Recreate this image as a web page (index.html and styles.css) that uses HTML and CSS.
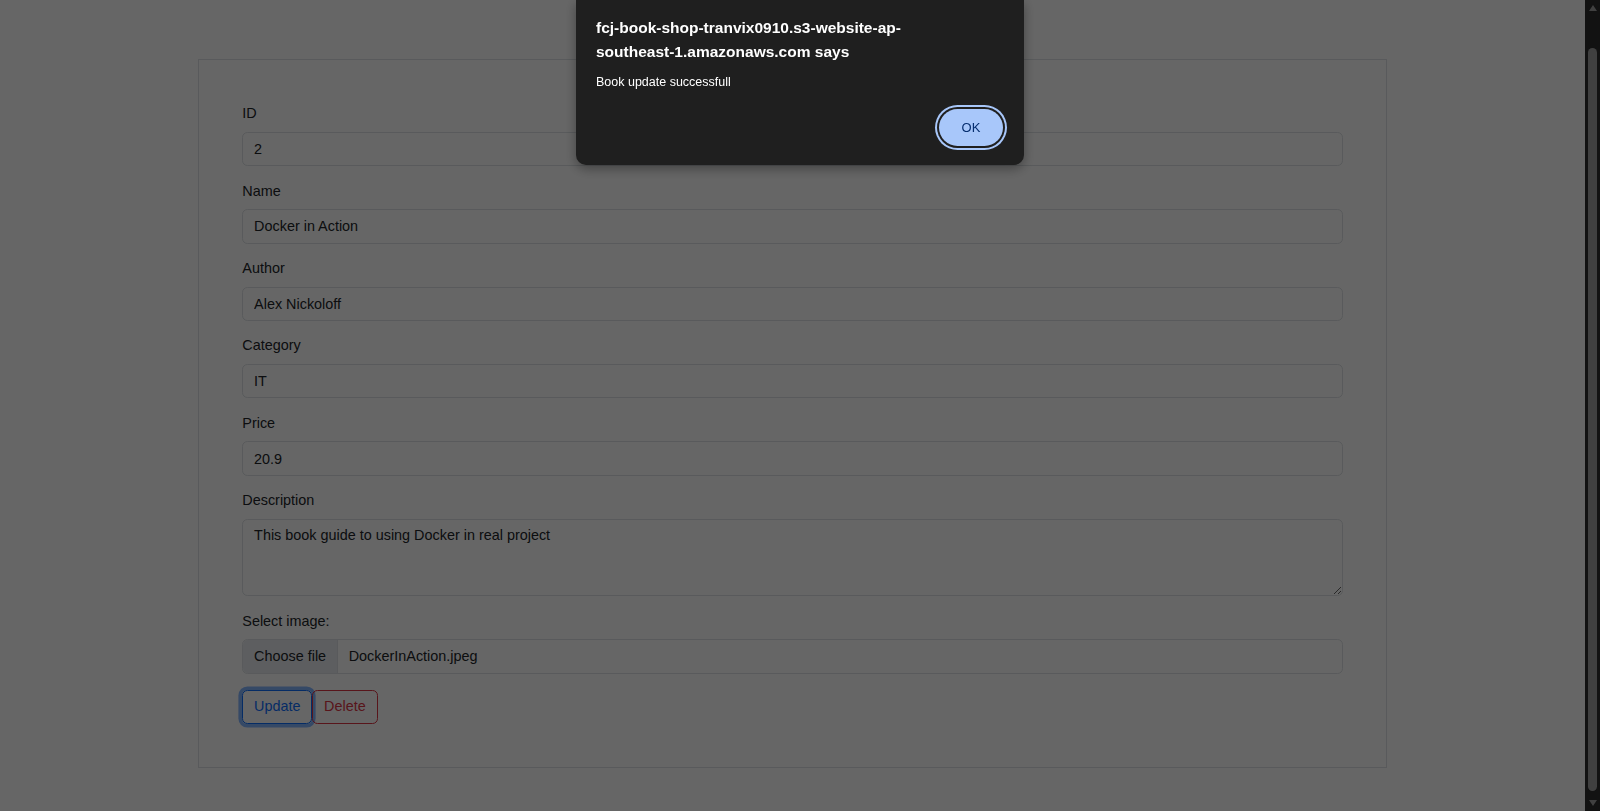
FILE: index.html
```html
<!DOCTYPE html>
<html lang="en">
<head>
    <meta charset="UTF-8">
    <meta name="viewport" content="width=device-width, initial-scale=1.0">
    <title>Book detail</title>
    <link rel="stylesheet" href="styles.css">
</head>
<body>
    <div class="window">
        <main class="page">
            <form class="book-card">
                <div class="field">
                    <label class="field-label">ID</label>
                    <input class="field-input" type="text" value="2">
                </div>
                <div class="field">
                    <label class="field-label">Name</label>
                    <input class="field-input" type="text" value="Docker in Action">
                </div>
                <div class="field">
                    <label class="field-label">Author</label>
                    <input class="field-input" type="text" value="Alex Nickoloff">
                </div>
                <div class="field">
                    <label class="field-label">Category</label>
                    <input class="field-input" type="text" value="IT">
                </div>
                <div class="field">
                    <label class="field-label">Price</label>
                    <input class="field-input" type="text" value="20.9">
                </div>
                <div class="field">
                    <label class="field-label">Description</label>
                    <textarea class="field-input field-textarea">This book guide to using Docker in real project</textarea>
                </div>
                <div class="field">
                    <label class="field-label">Select image:</label>
                    <div class="file-input">
                        <span class="file-btn">Choose file</span>
                        <span class="file-name">DockerInAction.jpeg</span>
                    </div>
                </div>
                <div class="actions"><button type="button" class="btn btn-primary focused">Update</button><button type="button" class="btn btn-danger">Delete</button></div>
            </form>
        </main>

        <div class="scrollbar">
            <span class="arrow arrow-up"></span>
            <span class="thumb"></span>
            <span class="arrow arrow-down"></span>
        </div>
    </div>

    <!-- page dimmed while the alert is open -->
    <div class="dim"></div>

    <div class="alert-box">
        <div class="alert-title">fcj-book-shop-tranvix0910.s3-website-ap-<br>southeast-1.amazonaws.com says</div>
        <div class="alert-message">Book update successfull</div>
        <div class="alert-actions">
            <button type="button" class="ok-btn">OK</button>
        </div>
    </div>
</body>
</html>
```

FILE: styles.css
```css
* {
    margin: 0;
    padding: 0;
    box-sizing: border-box;
}

body {
    font-family: 'Liberation Sans', Arial, sans-serif;
    font-size: 14.4px;
    line-height: 1.5;
    color: #212529;
    background: #fff;
    overflow: hidden;
}

.window {
    display: flex;
    height: 100vh;
}

.page {
    flex: 1;
    padding-top: 59px;
}

.book-card {
    width: 75%;
    margin: 0 auto;
    padding: 43.2px;
    border: 1px solid #dee2e6;
    background: #fff;
}

.field {
    margin-bottom: 14.4px;
}

.field-label {
    display: inline-block;
    margin-bottom: 7.2px;
}

.field-input {
    display: block;
    width: 100%;
    height: 34.2px;
    padding: 5.4px 10.8px;
    font-family: inherit;
    font-size: 14.4px;
    line-height: 1.5;
    color: #212529;
    background: #fff;
    border: 1px solid #dee2e6;
    border-radius: 5.4px;
    outline: none;
}

.field-textarea {
    height: 77.4px;
    resize: vertical;
}

.file-input {
    display: flex;
    height: 34.2px;
    border: 1px solid #dee2e6;
    border-radius: 5.4px;
    overflow: hidden;
}

.file-btn {
    padding: 5.4px 10.8px;
    background: #e9ecef;
    border-right: 1px solid #dee2e6;
}

.file-name {
    padding: 5.4px 10.8px;
}

.actions {
    display: flex;
    padding-top: 1.6px;
}

.btn {
    height: 34.2px;
    padding: 5.4px 10.8px;
    font-family: inherit;
    font-size: 14.4px;
    line-height: 1.5;
    background: transparent;
    border: 1px solid;
    border-radius: 5.4px;
    cursor: pointer;
}

.btn-primary {
    color: #0d6efd;
    border-color: #0d6efd;
}

.btn-danger {
    color: #dc3545;
    border-color: #dc3545;
}

.focused {
    box-shadow: 0 0 0 3.6px rgba(13, 110, 253, 0.5);
}

.scrollbar {
    width: 15px;
    display: flex;
    flex-direction: column;
    align-items: center;
    background: #2d2d2d;
}

.arrow {
    width: 0;
    height: 0;
    border-left: 4px solid transparent;
    border-right: 4px solid transparent;
}

.arrow-up {
    margin: 5px 0 37px;
    border-bottom: 6px solid #a0a0a0;
}

.arrow-down {
    margin: 9px 0 5px;
    border-top: 6px solid #a0a0a0;
}

.thumb {
    flex: 1;
    width: 9px;
    border-radius: 5px;
    background: #a0a0a0;
}

.dim {
    position: fixed;
    inset: 0;
    z-index: 10;
    background: rgba(0, 0, 0, 0.6);
}

.alert-box {
    position: fixed;
    top: 0;
    left: 576px;
    z-index: 11;
    width: 448px;
    padding: 16px 20px 19px;
    background: #1f1f1f;
    border-radius: 0 0 10px 10px;
    box-shadow: 0 4px 12px rgba(0, 0, 0, 0.35);
}

.alert-title {
    font-size: 15.5px;
    font-weight: 600;
    line-height: 24px;
    color: #fff;
}

.alert-message {
    margin-top: 8.5px;
    font-size: 12.5px;
    line-height: 18px;
    color: #fff;
}

.alert-actions {
    display: flex;
    justify-content: flex-end;
    margin-top: 18.5px;
    padding-right: 1px;
}

.ok-btn {
    width: 64px;
    height: 37px;
    font-family: inherit;
    font-size: 13px;
    font-weight: 500;
    color: #062e6f;
    background: #a8c7fa;
    border: none;
    border-radius: 19px;
    box-shadow: 0 0 0 2px #1f1f1f, 0 0 0 4px #a8c7fa;
    cursor: pointer;
}
```
